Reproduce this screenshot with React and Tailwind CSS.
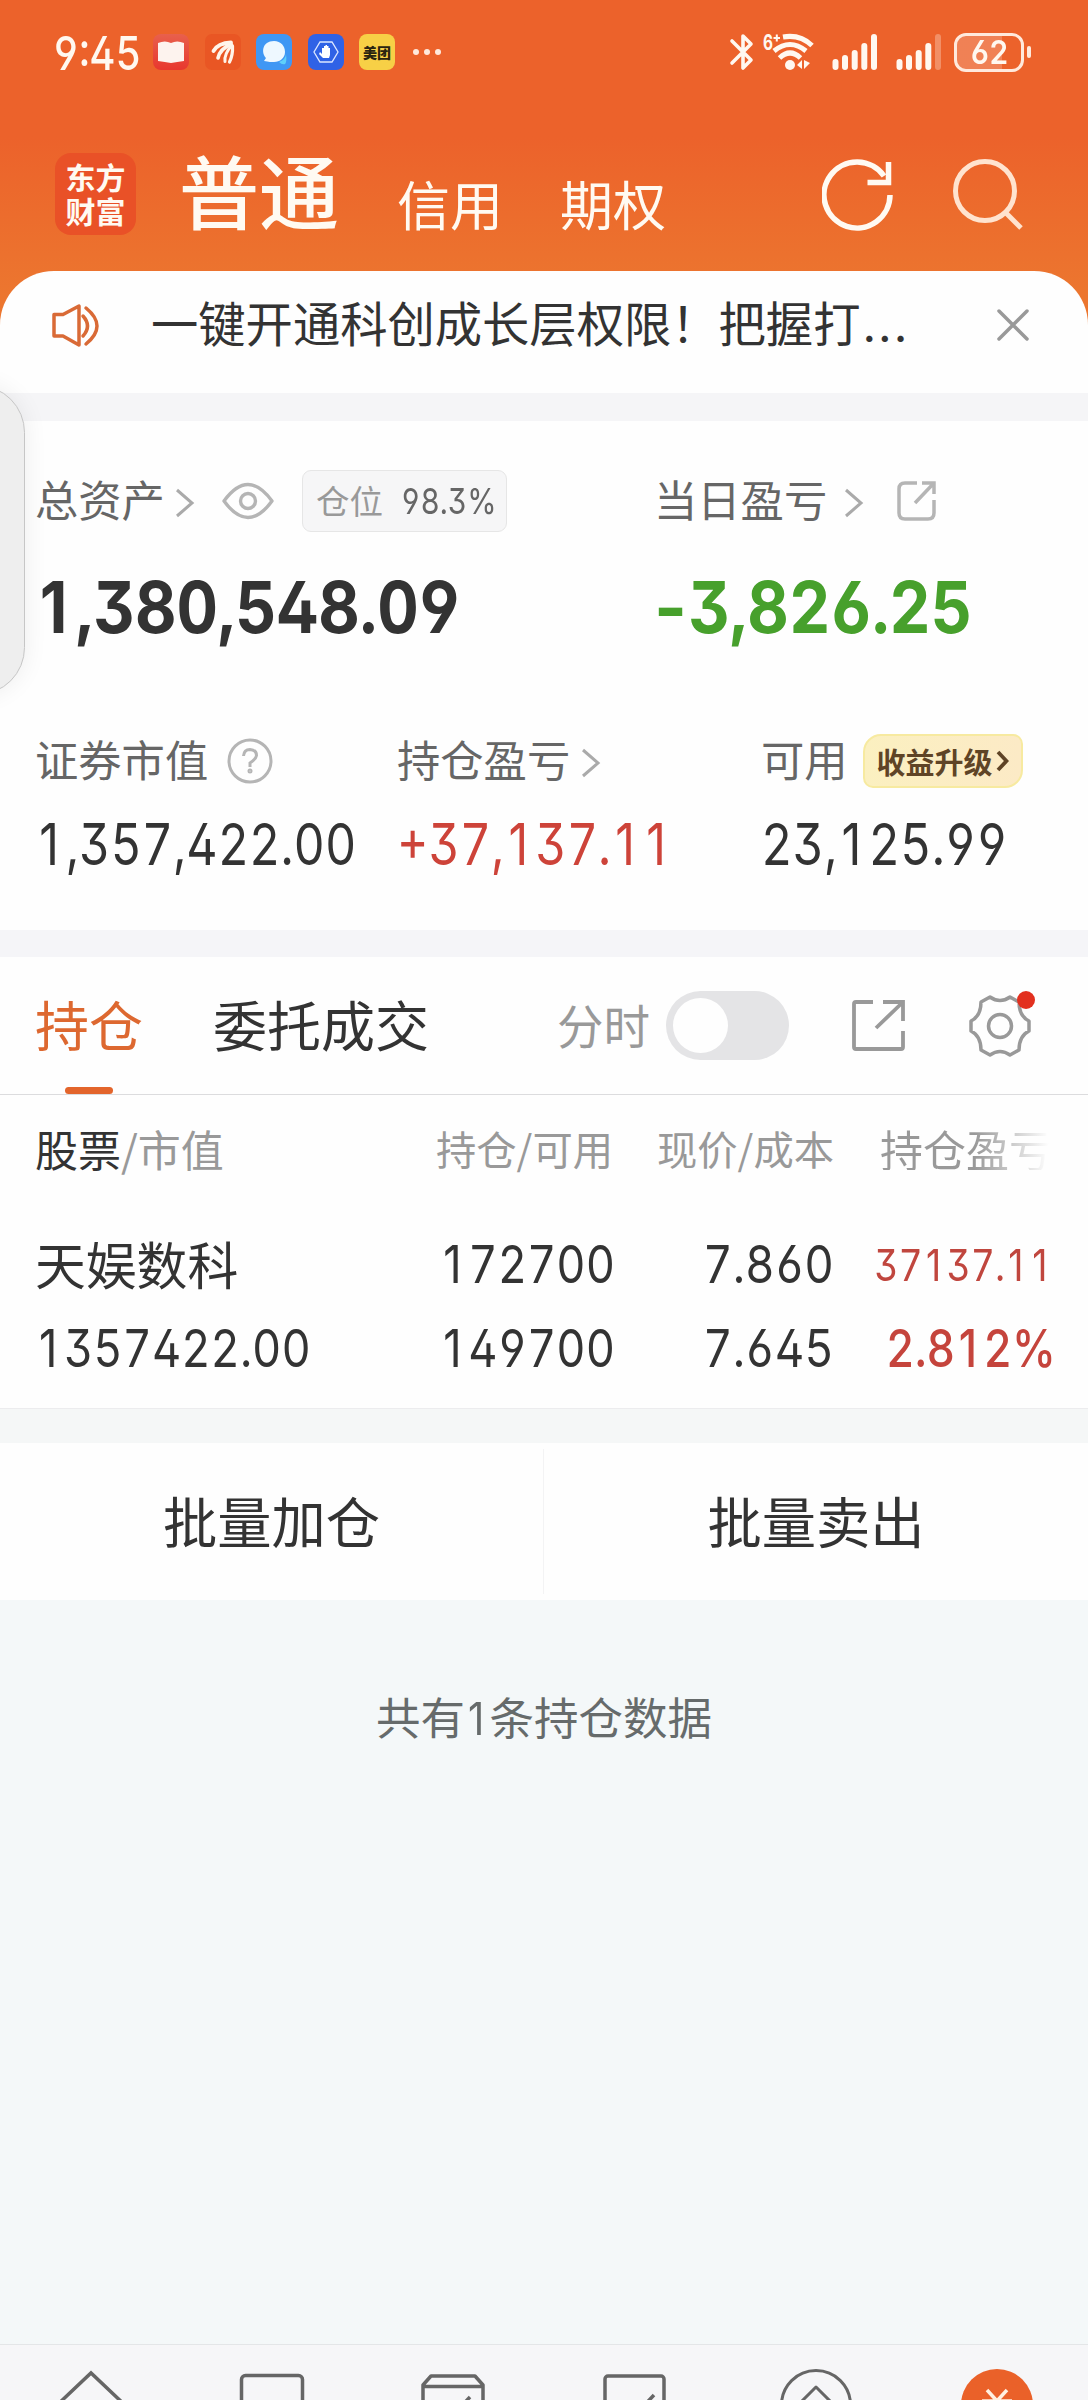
import React from 'react';

// tabular digits, but the "1" and the minus keep their plain proportional shapes
const Num = ({ children, className = '' }) => (
    <span
        className={`inline-block whitespace-nowrap leading-none font-['Inter','Noto_Sans_CJK_SC',sans-serif] [font-feature-settings:'ss01','cv02','cv03','cv04','tnum'] ${className}`}
    >
        {String(children).split(/([1-])/).map((part, i) => {
            if (part === '1') {
                return (
                    <span key={i} className="inline-block w-[0.64em] pr-[0.06em] text-center [font-feature-settings:'tnum'_0]">1</span>
                );
            }
            if (part === '-') {
                return (
                    <span key={i} className="mr-[0.07em] inline-block origin-left scale-x-[1.1] [font-feature-settings:'tnum'_0]">-</span>
                );
            }
            return part;
        })}
    </span>
);

const Chevron = ({ className = '' }) => (
    <svg className={`shrink-0 ${className}`} width="20" height="30" viewBox="0 0 20 30" fill="none" stroke="#aaaaaa" strokeWidth="3">
        <path d="M2 2 L17 15 L2 28" />
    </svg>
);

const Signal = ({ weak }) => (
    <svg width="46" height="38" viewBox="0 0 46 38" fill="#fff8f0">
        <rect x="0.5" y="26" width="6" height="11" rx="3" />
        <rect x="10" y="22" width="6" height="15" rx="3" />
        <rect x="19.7" y="17" width="6" height="20" rx="3" />
        <rect x="29.3" y="10" width="6" height="27" rx="3" />
        <rect x="39" y="1" width="6" height="36" rx="3" opacity={weak ? 0.3 : 1} />
    </svg>
);

const StatusBar = () => (
    <div className="flex h-[104px] items-center pl-[53px] text-[#fff8f0]">
        <div className="w-[100px]">
            <Num className="origin-left scale-x-[0.85] text-[47px] font-medium">9:45</Num>
        </div>
        <div className="flex gap-[15.5px]">
            <svg width="36" height="36" viewBox="0 0 36 36">
                <defs>
                    <linearGradient id="book" x1="0" y1="0" x2="0" y2="1">
                        <stop offset="0" stopColor="#e8604c" />
                        <stop offset="1" stopColor="#e8372e" />
                    </linearGradient>
                </defs>
                <rect width="36" height="36" rx="8" fill="url(#book)" />
                <path d="M5 9 Q12 6 18 9 Q24 6 31 9 V27 Q24 28 18 29 Q12 28 5 27 Z" fill="#fdf3ee" />
            </svg>
            <svg width="36" height="36" viewBox="0 0 36 36">
                <rect width="36" height="36" rx="7" fill="#e95624" />
                <g fill="none" stroke="#fff4ea" strokeLinecap="round">
                    <path d="M26 8.500 Q13 9 8.500 17" strokeWidth="3.800" />
                    <path d="M26 10 Q15 15 13 24" strokeWidth="3.600" />
                    <path d="M27 11 Q19 20 20 27.500" strokeWidth="3" />
                    <path d="M27.500 12 Q28 21 24.500 28" strokeWidth="3.200" />
                </g>
            </svg>
            <svg width="36" height="36" viewBox="0 0 36 36">
                <rect width="36" height="36" rx="8" fill="#3f97f4" />
                <path d="M23 28 Q30 25 30 20 Q31 28 29 30 Q26 31 23 28Z" fill="#5fd0fa" />
                <path d="M18 7 C25 7 29 12 29 18 C29 24 24 28 18 28 C15 28 13 28 8 27 L10 24 C5 19 6 7 18 7Z" fill="#eef8ff" />
            </svg>
            <svg width="36" height="36" viewBox="0 0 36 36">
                <rect width="36" height="36" rx="8" fill="#2f62e6" />
                <path d="M12 8 H24 L30 18 L24 28 H12 L6 18Z" fill="none" stroke="#dce7ff" strokeWidth="1.3" />
                <path d="M14 14 V20 L12 18 L11 20 L15 24 H21 L22 21 V14 H20.5 V12 H19 V11 H17.5 V12 H16 V14Z" fill="#fff" />
            </svg>
            <div className="flex h-9 w-9 items-center justify-center rounded-lg bg-[#f7d046] text-[14px] font-black leading-none text-[#2a2410]">
                美团
            </div>
        </div>
        <div className="ml-[18px] flex w-[30px] gap-[5px]">
            <span className="h-1.5 w-1.5 rounded-full bg-[#ffe9dc]" />
            <span className="h-1.5 w-1.5 rounded-full bg-[#ffe9dc]" />
            <span className="h-1.5 w-1.5 rounded-full bg-[#ffe9dc]" />
        </div>
        <div className="ml-auto flex items-center pr-[57px]">
            <svg width="26" height="38" viewBox="0 0 26 38" fill="none" stroke="#fff8f0" strokeWidth="3.6" strokeLinejoin="round" strokeLinecap="round">
                <path d="M3 8 L22 27 L14 35 V3 L22 11 L3 30" />
            </svg>
            <svg className="ml-[7px] overflow-visible" width="54" height="40" viewBox="0 0 54 40" fill="none" stroke="#fff8f0" strokeWidth="5">
                <text x="1" y="18" fontSize="21" fontWeight="700" fill="#fff8f0" stroke="none" fontFamily="Inter" textLength="10" lengthAdjust="spacingAndGlyphs">6</text>
                <path d="M11.500 6 H18 M14.800 2.500 V9.500" strokeWidth="2" />
                <path d="M21 5 Q38 2 50 13.500" />
                <path d="M12 19 Q28 6 44 19" />
                <path d="M17.500 26 Q28 16 38.500 26" />
                <circle cx="28" cy="33" r="5" fill="#fff8f0" stroke="none" />
                <path d="M40 28 V37 L35 33 Z M42 28 V37 L48 31 Z" fill="#fff8f0" stroke="none" />
            </svg>
            <span className="ml-4"><Signal /></span>
            <span className="ml-[18px]"><Signal weak /></span>
            <div className="ml-[12px] flex h-[39px] w-[70px] items-center justify-center rounded-[12px] border-[3px] border-[#ffe9dc] bg-linear-to-r from-white/20 from-70% to-transparent to-70%">
                <Num className="scale-x-90 text-[33px] font-semibold">62</Num>
            </div>
            <span className="ml-[3px] h-3 w-[4px] rounded-sm bg-[#ffe9dc]" />
        </div>
    </div>
);

const TitleBar = () => (
    <div className="flex h-[167px] items-start pl-[55px] text-[#fffaf2]">
        <div className="mt-[49px] flex h-[82px] w-[81px] flex-col items-center justify-center rounded-[16px] bg-[#e95127] pb-[3px] text-[30px] font-bold leading-[34px]">
            <span>东方</span>
            <span>财富</span>
        </div>
        <h1 className="ml-[43px] mt-[44px] w-[218px] text-[80px] font-medium leading-[80px]">普通</h1>
        <span className="mt-[73px] w-[163px] text-[53px] leading-[53px]">信用</span>
        <span className="mt-[73px] w-[262px] text-[53px] leading-[53px]">期权</span>
        <svg className="mt-[54px]" width="74" height="76" viewBox="0 0 74 76" fill="none" stroke="#fffaf2" strokeWidth="5.500">
            <path d="M68.500 38 A33 33 0 1 1 62.500 19" transform="translate(-0.500 -1)" />
            <path d="M66.500 4 V24.500 H45.500" />
        </svg>
        <svg className="ml-[55px] mt-[53px]" width="74" height="76" viewBox="0 0 74 76" fill="none" stroke="#ffe3cf" strokeWidth="5">
            <circle cx="34" cy="34" r="29.500" />
            <path d="M55 56 L70 71" />
        </svg>
    </div>
);

const Notice = () => (
    <div className="flex h-[122px] items-center rounded-t-[54px] bg-[#fefefe] pb-[14px] pl-[50px] pr-[58px]">
        <svg width="52" height="46" viewBox="0 0 52 46" fill="none" stroke="#d96a36" strokeWidth="3.500" strokeLinejoin="round" strokeLinecap="round">
            <path d="M4 12.500 H13 L29 4 V43 L13 34 H4 Z" />
            <path d="M33 14 Q42 24 33 34" />
            <path d="M36 6 Q58 24 36 42" />
        </svg>
        <p className="mb-[4px] ml-[49px] whitespace-nowrap text-[47.3px] leading-none text-[#333]">
            一键开通科创成长层权限！把握打<span className="ml-[2px] font-['Inter'] tracking-[2px]">...</span>
        </p>
        <svg className="ml-auto" width="34" height="34" viewBox="0 0 34 34" stroke="#999" strokeWidth="3.500" strokeLinecap="round">
            <path d="M3 3 L31 31 M31 3 L3 31" />
        </svg>
    </div>
);

const Assets = () => (
    <section className="bg-[#fefefe]">
        <div className="grid h-[236px] grid-cols-[619px_1fr] pl-[35px] pt-[48px]">
            <div>
                <div className="flex h-[64px] items-center text-[43.3px] leading-none text-[#666]">
                    <span className="mb-[4px]">总资产</span>
                    <Chevron className="ml-[10px] mt-1" />
                    <svg className="ml-[27px]" width="52" height="38" viewBox="0 0 52 38" fill="none" stroke="#b5b5b5" strokeWidth="3.400">
                        <path d="M2 19 Q26 -14 50 19 Q26 52 2 19Z" strokeLinejoin="round" />
                        <circle cx="26" cy="19" r="7.500" />
                    </svg>
                    <div className="ml-[28px] flex h-[62px] w-[205px] items-center rounded-[9px] border border-[#e6e6e6] bg-[#f6f6f7] pl-[13px] text-[33.5px]">
                        <span className="mb-[2px] w-[85px] shrink-0 text-[#999]">仓位</span>
                        <Num className="origin-left scale-x-[0.83] text-[36px]">98.3%</Num>
                    </div>
                </div>
                <Num className="mt-[39px] origin-left scale-x-[0.905] text-[71px] font-bold text-[#333]">1,380,548.09</Num>
            </div>
            <div>
                <div className="flex h-[64px] items-center text-[43.3px] leading-none text-[#666]">
                    <span className="mb-[4px]">当日盈亏</span>
                    <Chevron className="ml-[17px] mt-1" />
                    <svg className="ml-[32px]" width="42" height="42" viewBox="0 0 42 42" fill="none" stroke="#b5b5b5" strokeWidth="3.500">
                        <path d="M21 3 H9 Q3 3 3 9 V33 Q3 39 9 39 H32 Q38 39 38 33 V20" />
                        <path d="M26 3 H38 V14 M38 3 L19 23" />
                    </svg>
                </div>
                <Num className="mt-[39px] origin-left scale-x-[0.905] text-[71px] font-bold text-[#47a02c]">-3,826.25</Num>
            </div>
        </div>
        <div className="grid h-[273px] grid-cols-[362px_364px_1fr] pl-[35px] pt-[74px]">
            <div>
                <div className="flex h-[60px] items-center text-[43.3px] leading-none text-[#666]">
                    <span className="mb-[4px]">证券市值</span>
                    <svg className="ml-[19px]" width="46" height="46" viewBox="0 0 46 46" fill="none" stroke="#b5b5b5" strokeWidth="3">
                        <circle cx="23" cy="23" r="21" />
                        <path d="M16.500 18 Q17 11.500 23 11.500 Q29.500 12 29.500 17.500 Q29 21 23 25 V29" />
                        <circle cx="23" cy="33" r="1" />
                    </svg>
                </div>
                <Num className="mt-[25px] origin-left scale-x-[0.85] text-[57px] text-[#333]">1,357,422.00</Num>
            </div>
            <div>
                <div className="flex h-[60px] items-center text-[43.3px] leading-none text-[#666]">
                    <span className="mb-[4px]">持仓盈亏</span>
                    <Chevron className="ml-[11px] mt-[3px]" />
                </div>
                <Num className="mt-[25px] origin-left scale-x-[0.85] text-[57px] text-[#cd4339]">+37,137.11</Num>
            </div>
            <div>
                <div className="flex h-[60px] items-center text-[43.3px] leading-none text-[#666]">
                    <span className="mb-[4px]">可用</span>
                    <div className="ml-[15px] flex h-[54px] w-[160px] items-center rounded-bl-[10px] rounded-br-[18px] rounded-tl-[18px] rounded-tr-[10px] border-2 border-[#f7eaa0] bg-linear-to-r from-[#fbf0c0] to-[#fceac6] pl-[12px] text-[29px] font-bold text-[#5f4426]">
                        收益升级
                        <svg className="ml-[3px]" width="13" height="22" viewBox="0 0 13 22" fill="none" stroke="#5f4426" strokeWidth="3.800">
                            <path d="M2 2 L10.500 11 L2 20" />
                        </svg>
                    </div>
                </div>
                <Num className="mt-[25px] origin-left scale-x-[0.855] text-[57px] text-[#333]">23,125.99</Num>
            </div>
        </div>
    </section>
);

const Tabs = () => (
    <div className="flex h-[138px] border-b border-[#dcdcde] bg-[#fefefe] pl-[35px] text-[54px] leading-[54px]">
        <div className="flex w-[178px] flex-col text-[#dd6830]">
            <span className="mt-[40px]">持仓</span>
            <span className="ml-[30px] mt-auto h-[7px] w-[48px] rounded-full bg-[#e3652c]" />
        </div>
        <span className="mt-[40px] w-[344px] text-[#333]">委托成交</span>
        <span className="mt-[44px] w-[109px] text-[46.5px] leading-[46.5px] text-[#999]">分时</span>
        <div className="mt-[34px] h-[69px] w-[123px] rounded-full bg-[#e4e4e6] p-[7px]">
            <div className="h-[55px] w-[55px] rounded-full bg-[#fefefe]" />
        </div>
        <svg className="ml-[61px] mt-[40px]" width="58" height="58" viewBox="0 0 58 58" fill="none" stroke="#999" strokeWidth="3.800">
            <path d="M23 5 H6 Q4 5 4 7 V50 Q4 52 6 52 H51 Q53 52 53 50 V34" />
            <path d="M33 5 H53 V24 M53 5 L26 31" />
        </svg>
        <div className="relative ml-[60px] mt-[37px] h-16 w-16">
            <svg width="64" height="64" viewBox="0 0 64 64" fill="none" stroke="#999" strokeWidth="3.500" strokeLinejoin="round">
                <path d="M22 3 Q32 10 42 3 L51 8 Q51 22 61 27 V37 Q51 42 51 56 L42 61 Q32 54 22 61 L13 56 Q13 42 3 37 V27 Q13 22 13 8 Z" />
                <circle cx="32" cy="32" r="11.500" />
            </svg>
            <span className="absolute -right-[3px] -top-[3px] h-[18px] w-[18px] rounded-full bg-[#e2301f]" />
        </div>
    </div>
);

const Holdings = () => (
    <section className="h-[314px] border-b border-[#ececee] bg-[#fefefe] text-[#333]">
        <div className="grid h-[106px] grid-cols-[375px_203px_221px_1fr] items-center pl-[35px] text-[43px] leading-none text-[#999]">
            <span><span className="text-[#333]">股票</span>/市值</span>
            <span className="text-right text-[40.3px]">持仓/可用</span>
            <span className="text-right text-[40.3px]">现价/成本</span>
            <span className="ml-[46px] w-[172px] bg-linear-to-r from-[#999] from-55% to-[#fefefe] to-98% bg-clip-text text-transparent">持仓盈亏</span>
        </div>
        <div className="mt-[4px] grid h-[120px] grid-cols-[375px_205px_219px_219px] items-center pl-[35px] text-right text-[52px] leading-none">
            <span className="mb-[4px] text-left text-[50.8px]">天娱数科</span>
            <Num className="origin-right scale-x-[0.87]">172700</Num>
            <Num className="origin-right scale-x-[0.88]">7.860</Num>
            <Num className="origin-right scale-x-[0.85] text-[44px] text-[#c0463e]">37137.11</Num>
        </div>
        <div className="-mt-[2px] grid h-[48px] grid-cols-[375px_205px_219px_222px] items-center pl-[35px] text-right text-[52px] leading-none">
            <Num className="origin-left scale-x-[0.87] text-left">1357422.00</Num>
            <Num className="origin-right scale-x-[0.87]">149700</Num>
            <Num className="origin-right scale-x-[0.88]">7.645</Num>
            <Num className="origin-right scale-x-[0.85] font-medium text-[#c5443c]">2.812%</Num>
        </div>
    </section>
);

const BottomNav = () => (
    <nav className="grid h-[56px] grid-cols-6 justify-items-center overflow-hidden border-t border-[#e4e6e8] bg-[#f6f6f8] pt-[20px]">
        <svg width="80" height="80" viewBox="0 0 80 80" fill="none" stroke="#666" strokeWidth="3.500">
            <path d="M4 42 L40 8 L76 42" />
        </svg>
        <svg width="80" height="80" viewBox="0 0 80 80" fill="none" stroke="#666" strokeWidth="3.500">
            <rect x="9.500" y="10.500" width="61" height="60" rx="4" />
        </svg>
        <svg width="80" height="80" viewBox="0 0 80 80" fill="none" stroke="#666" strokeWidth="3.500">
            <path d="M10 70 V20 L18 11 H62 L70 20 V70 M10 21.500 H70" strokeLinejoin="round" />
            <path d="M57 32 L40 50" />
        </svg>
        <svg width="80" height="80" viewBox="0 0 80 80" fill="none" stroke="#666" strokeWidth="3.500">
            <rect x="10" y="11" width="59" height="60" rx="3" />
            <path d="M59 30 L42 48 L34 38" />
        </svg>
        <svg width="80" height="80" viewBox="0 0 80 80" fill="none" stroke="#666" strokeWidth="3">
            <circle cx="40" cy="40" r="34.500" />
            <path d="M22 40 L40 22 L58 40" strokeLinejoin="round" />
        </svg>
        <svg width="80" height="80" viewBox="0 0 80 80" fill="none" stroke="#fff0e0" strokeWidth="3.500">
            <circle cx="40" cy="40" r="36" fill="#ea6129" stroke="none" />
            <path d="M30 25 L40 36 L50 25 M25 36 H55 M40 36 V56" />
        </svg>
    </nav>
);

const App = () => {
    return (
        <div className="relative flex h-[2400px] w-[1088px] flex-col overflow-hidden bg-[#f4f8f9] font-['Noto_Sans_CJK_SC',sans-serif]">
            <header className="bg-linear-to-b from-[#ec622b] from-35% to-[#ec762f] to-75%">
                <StatusBar />
                <TitleBar />
                <Notice />
            </header>
            <div className="h-[28px] bg-[#f5f5f7]" />
            <Assets />
            <div className="h-[27px] bg-[#f5f5f8]" />
            <Tabs />
            <Holdings />
            <div className="h-[34px] bg-[#f5f7f7]" />
            <div className="grid h-[157px] grid-cols-2 items-center bg-[#fefefe] text-center text-[54.3px] leading-none text-[#333]">
                <button className="h-[145px] border-r border-[#f3f3f4] pb-[3px]">批量加仓</button>
                <button className="h-[145px] pb-[3px]">批量卖出</button>
            </div>
            <p className="mt-[94px] text-center text-[44.5px] leading-none text-[#666b6b]">
                共有<Num className="-mx-[2px] scale-x-[0.9]">1</Num>条持仓数据
            </p>
            <div className="mt-auto">
                <BottomNav />
            </div>
            {/* edge panel handle */}
            <div className="absolute -left-[70px] top-[385px] h-[310px] w-[95px] rounded-[52px] border-[1.5px] border-[#c6c6c6] bg-[#eeeeee] shadow-[0_0_24px_rgba(0,0,0,0.07)]" />
        </div>
    );
};

export default App;
